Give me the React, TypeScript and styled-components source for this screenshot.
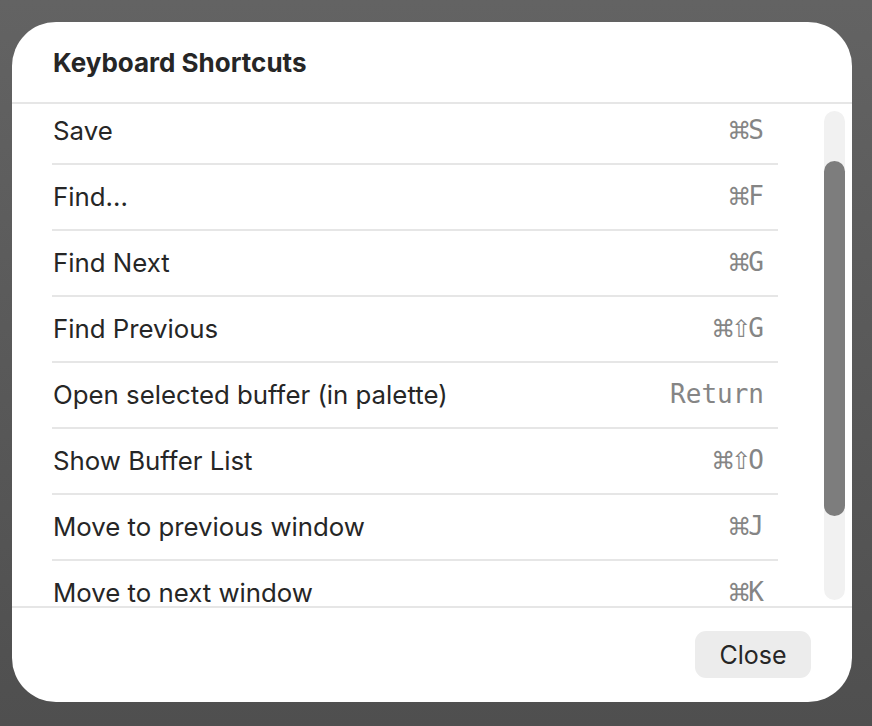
import React from "react";
import styled, { createGlobalStyle } from "styled-components";

const GlobalStyle = createGlobalStyle`
  html, body {
    margin: 0;
    padding: 0;
  }
  body {
    width: 872px;
    height: 726px;
    overflow: hidden;
    background: linear-gradient(180deg, #636363 0%, #4f4f4f 100%);
    font-family: Inter, "Noto Sans", "Liberation Sans", sans-serif;
    -webkit-font-smoothing: antialiased;
  }
`;

const Backdrop = styled.div`
  width: 872px;
  height: 726px;
  padding: 22px 20px 24px 12px;
  box-sizing: border-box;
`;

const Dialog = styled.div`
  width: 840px;
  height: 680px;
  background: #ffffff;
  border-radius: 44px;
  overflow: hidden;
  display: grid;
  grid-template-rows: 82px 1fr 96px;
`;

const Header = styled.header`
  display: flex;
  align-items: center;
  padding: 0 41px;
  border-bottom: 2px solid #e6e6e6;
`;

const Title = styled.h1`
  margin: 0;
  font-size: 26px;
  font-weight: 700;
  color: #262626;
`;

const Body = styled.div`
  display: grid;
  grid-template-columns: 1fr 21px;
  column-gap: 46px;
  padding: 0 7px 0 40px;
  min-height: 0;
`;

const Viewport = styled.div`
  overflow: hidden;
  min-height: 0;
`;

const List = styled.ul`
  list-style: none;
  margin: -5px 0 0;
  padding: 0;
`;

const Row = styled.li`
  height: 66px;
  box-sizing: border-box;
  display: flex;
  align-items: center;
  justify-content: space-between;
  padding: 0 14px 2px 1px;
  border-bottom: 2px solid #e6e6e6;
`;

const Label = styled.span`
  font-size: 25.8px;
  color: #262626;
`;

const Keys = styled.span`
  display: flex;
  align-items: baseline;
  font-family: "DejaVu Sans Mono", "Liberation Mono", monospace;
  font-size: 26px;
  color: #858585;
`;

/* modifier symbols (⌘, ⇧) sit before the key letter, tightened to one cell */
const Modifier = styled.span`
  font-family: "DejaVu Sans", "DejaVu Sans Mono", sans-serif;
  font-size: 24px;
  letter-spacing: -4px;
  margin-right: 1px;
`;

const Track = styled.div`
  margin: 7px 0 6px;
  border-radius: 11px;
  background: #f1f1f1;
  display: flex;
  flex-direction: column;
`;

const Thumb = styled.div<{ $offset: number; $length: number }>`
  margin-top: ${(p) => p.$offset}px;
  height: ${(p) => p.$length}px;
  border-radius: 11px;
  background: #7d7d7d;
`;

const Footer = styled.footer`
  display: flex;
  align-items: center;
  justify-content: flex-end;
  padding: 0 41px 1px;
  border-top: 2px solid #e6e6e6;
`;

const Button = styled.button`
  width: 116px;
  height: 47px;
  border: none;
  border-radius: 11px;
  background: #ececec;
  font-family: Inter, "Noto Sans", "Liberation Sans", sans-serif;
  font-size: 25px;
  color: #262626;
  padding: 0;
  cursor: pointer;
`;

const shortcuts: { label: string; mods: string; key: string }[] = [
  { label: "Save", mods: "⌘", key: "S" },
  { label: "Find...", mods: "⌘", key: "F" },
  { label: "Find Next", mods: "⌘", key: "G" },
  { label: "Find Previous", mods: "⌘⇧", key: "G" },
  { label: "Open selected buffer (in palette)", mods: "", key: "Return" },
  { label: "Show Buffer List", mods: "⌘⇧", key: "O" },
  { label: "Move to previous window", mods: "⌘", key: "J" },
  { label: "Move to next window", mods: "⌘", key: "K" },
];

export default function App() {
  return (
    <>
      <GlobalStyle />
      <Backdrop>
        <Dialog role="dialog" aria-label="Keyboard Shortcuts">
          <Header>
            <Title>Keyboard Shortcuts</Title>
          </Header>
          <Body>
            <Viewport>
              <List>
                {shortcuts.map((s) => (
                  <Row key={s.label}>
                    <Label>{s.label}</Label>
                    <Keys>
                      {s.mods && <Modifier>{s.mods}</Modifier>}
                      {s.key}
                    </Keys>
                  </Row>
                ))}
              </List>
            </Viewport>
            <Track>
              <Thumb $offset={50} $length={355} />
            </Track>
          </Body>
          <Footer>
            <Button>Close</Button>
          </Footer>
        </Dialog>
      </Backdrop>
    </>
  );
}
